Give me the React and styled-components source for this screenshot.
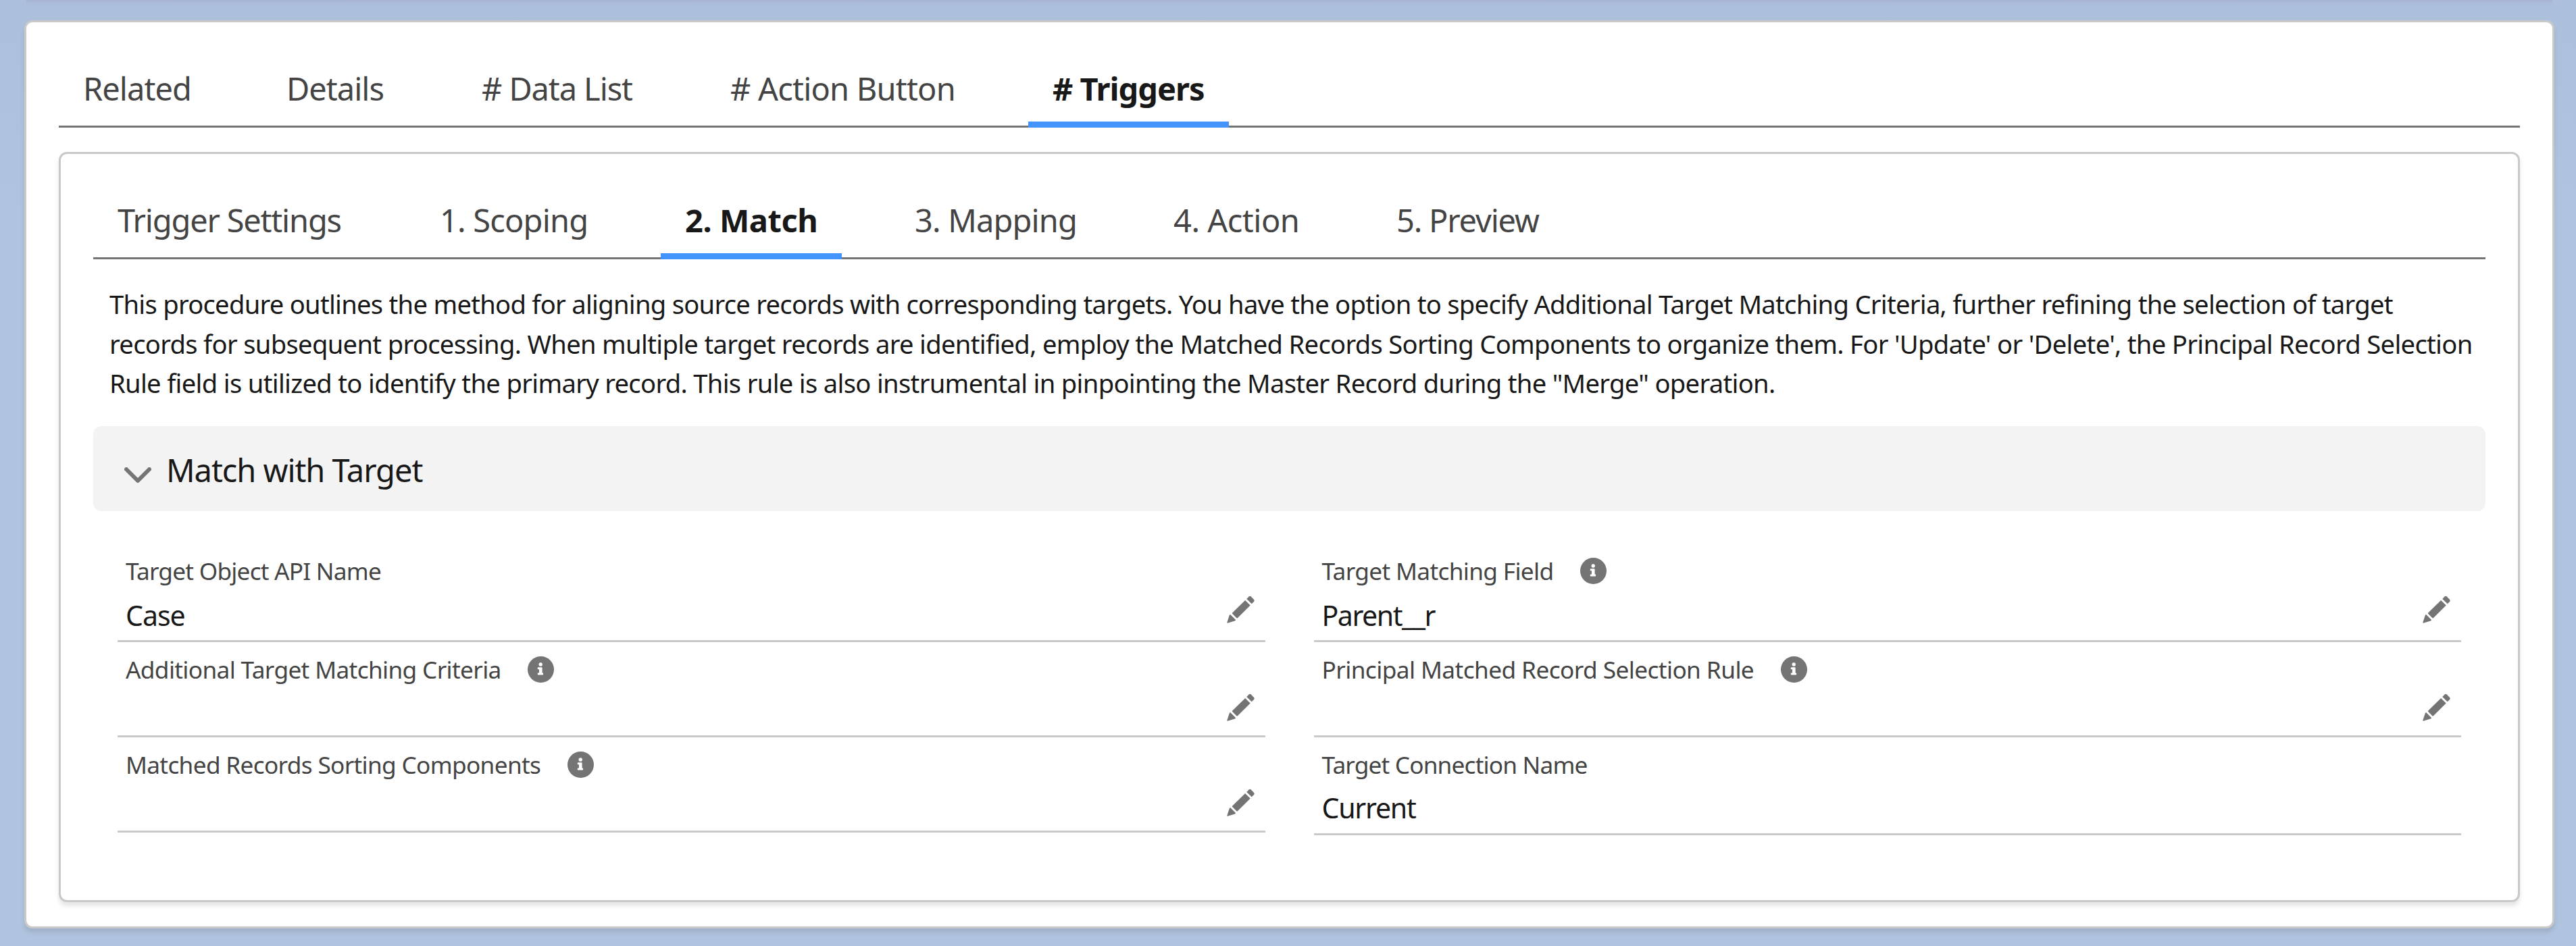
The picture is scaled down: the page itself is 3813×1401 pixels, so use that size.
import React from "react";
import styled, { createGlobalStyle } from "styled-components";

const GlobalStyle = createGlobalStyle`
  * { box-sizing: border-box; }
  body {
    margin: 0;
    background: #b0c4df;
    color: #181818;
    font-family: "Noto Sans", "Open Sans", sans-serif;
  }
`;

const Page = styled.main`
  height: 1401px;
  padding: 30px 32px 26px 36px;
  background:
    linear-gradient(#a6b3d2, #abbddb 5px, rgba(171, 190, 219, 0) 12px) 39px 0 / 3739px 12px no-repeat,
    linear-gradient(#acc0dc, #b0c4df) 0 0 / 100% 330px no-repeat,
    #b0c4df;
`;

const Card = styled.section`
  border: 3px solid #c9c9c9;
  border-radius: 12px;
  background: #fff;
  box-shadow: 0 6px 6px 0 rgba(0, 0, 0, 0.1);
  padding: ${(p) => p.$padding};
`;

const TabBar = styled.nav`
  display: flex;
  gap: 72px;
  height: 120px;
  box-shadow: inset 0 -3px 0 #747474;
`;

const Tab = styled.button`
  flex: none;
  height: 120px;
  width: ${(p) => p.$width + 72}px;
  padding: 4px 0 0 36px;
  border: 0;
  background: none;
  text-align: left;
  white-space: nowrap;
  font-family: inherit;
  font-size: 47px;
  line-height: 116px;
  letter-spacing: ${(p) => p.$tracking}px;
  font-weight: ${(p) => (p.$active ? 700 : 400)};
  color: ${(p) => (p.$active ? "#181818" : "#444")};
  box-shadow: ${(p) => (p.$active ? "inset 0 -9px 0 #4294fb" : "none")};
`;

const InnerCard = styled(Card)`
  margin-top: 36px;
`;

const Description = styled.p`
  margin: 37px 0 34.5px;
  padding-left: 24px;
  font-size: 38.2px;
  line-height: 58.5px;
`;

const Line = styled.span`
  display: block;
  white-space: nowrap;
  letter-spacing: ${(p) => p.$tracking}px;
`;

const SectionHeader = styled.header`
  display: flex;
  align-items: center;
  gap: 22px;
  height: 126px;
  padding: 3px 46px 0;
  border-radius: 12px;
  background: #f3f3f3;
`;

const SectionTitle = styled.h3`
  margin: 0;
  font-size: 47px;
  font-weight: 400;
  letter-spacing: -1.05px;
`;

const Chevron = styled.svg`
  width: 40px;
  height: 24px;
  margin-top: 17px;
`;

const Fields = styled.div`
  display: grid;
  grid-template-columns: 1fr 1fr;
  column-gap: 72px;
  align-items: start;
  padding: 47px 36px 0;
`;

const Field = styled.div`
  height: ${(p) => p.$height}px;
  padding: ${(p) => (p.$first ? 14 : 13)}px 16px 0 12px;
  border-bottom: 3px solid #c9c9c9;
`;

const Label = styled.div`
  display: flex;
  align-items: center;
  height: 54px;
  color: #444;
  font-size: 35.25px;
  white-space: nowrap;
  letter-spacing: ${(p) => p.$tracking}px;
`;

const ValueRow = styled.div`
  display: flex;
  justify-content: space-between;
  margin-top: ${(p) => (p.$first ? 8 : 6)}px;
  font-size: 41.1px;
  line-height: 63px;
  letter-spacing: ${(p) => p.$tracking}px;
`;

const InfoSvg = styled.svg`
  flex: none;
  width: 39px;
  height: 39px;
  margin-left: 39.5px;
`;

const PencilSvg = styled.svg`
  flex: none;
  width: 41px;
  height: 41px;
  margin-top: ${(p) => (p.$first ? 2 : 3)}px;
  overflow: visible;
`;

const InfoIcon = () => (
  <InfoSvg viewBox="0 0 39 39">
    <circle cx="19.5" cy="19.5" r="19.5" fill="#747474" />
    <circle cx="19.2" cy="12" r="2.7" fill="#fff" />
    <path d="M15.6 16.2h5.2q.8 0 .8.8v7.6h.7q.8 0 .8.8v1.4q0 .8-.8.8h-6.7q-.8 0-.8-.8v-1.4q0-.8.8-.8h1.4v-5.3h-1.4q-.8 0-.8-.8V17q0-.8.8-.8z" fill="#fff" />
  </InfoSvg>
);

const PencilIcon = ({ first }) => (
  <PencilSvg $first={first} viewBox="0 0 41 41" fill="#747474">
    <path d="M29.2 4.9l3.4-3.4q1.6-1.5 3.2 0l4.3 4.5q1.3 1.5 0 2.9l-3.4 3.4z" />
    <path d="M27.1 7l7.6 7.6-18.9 18.6q-.7.7-1.4 0l-6.2-6.2q-.7-.7 0-1.4z" />
    <path d="M4.3 28.4q.7-.7 1.3 0l7.2 7.3q.7.8-.2 1.3l-.9.6-9.9 3q-1.7.4-1.4-1.1l3.3-10.1z" />
  </PencilSvg>
);

const mainTabs = [
  { label: "Related", width: 157, tracking: -0.952 },
  { label: "Details", width: 145, tracking: -1.0 },
  { label: "# Data List", width: 224, tracking: -1.1 },
  { label: "# Action Button", width: 333, tracking: -0.8 },
  { label: "# Triggers", width: 225, tracking: -0.988, active: true },
];

const stepTabs = [
  { label: "Trigger Settings", width: 333, tracking: -1.2 },
  { label: "1. Scoping", width: 219, tracking: -0.82 },
  { label: "2. Match", width: 196, tracking: -0.45, active: true },
  { label: "3. Mapping", width: 239, tracking: -0.853 },
  { label: "4. Action", width: 186, tracking: -0.5 },
  { label: "5. Preview", width: 213, tracking: -1.2 },
];

const description = [
  {
    text: "This procedure outlines the method for aligning source records with corresponding targets. You have the option to specify Additional Target Matching Criteria, further refining the selection of target",
    tracking: -0.746,
  },
  {
    text: "records for subsequent processing. When multiple target records are identified, employ the Matched Records Sorting Components to organize them. For 'Update' or 'Delete', the Principal Record Selection",
    tracking: -0.7,
  },
  {
    text: 'Rule field is utilized to identify the primary record. This rule is also instrumental in pinpointing the Master Record during the "Merge" operation.',
    tracking: -0.7,
  },
];

const fields = [
  { label: "Target Object API Name", tracking: -0.795, value: "Case", valueTracking: -1.07, editable: true, first: true, height: 147 },
  { label: "Target Matching Field", tracking: -0.674, value: "Parent__r", valueTracking: -1.496, info: true, editable: true, first: true, height: 147 },
  { label: "Additional Target Matching Criteria", tracking: -0.666, info: true, editable: true, height: 141 },
  { label: "Principal Matched Record Selection Rule", tracking: -0.6, info: true, editable: true, height: 141 },
  { label: "Matched Records Sorting Components", tracking: -0.696, info: true, editable: true, height: 141 },
  { label: "Target Connection Name", tracking: -0.848, value: "Current", valueTracking: -1.26, height: 145 },
];

const Tabs = ({ items }) => (
  <TabBar>
    {items.map((t) => (
      <Tab key={t.label} $width={t.width} $tracking={t.tracking} $active={t.active}>
        {t.label}
      </Tab>
    ))}
  </TabBar>
);

export default function App() {
  return (
    <>
      <GlobalStyle />
      <Page>
        <Card $padding="36px 48px">
          <Tabs items={mainTabs} />
          <InnerCard $padding="36px 48px 96px">
            <Tabs items={stepTabs} />
            <Description>
              {description.map((l) => (
                <Line key={l.text} $tracking={l.tracking}>
                  {l.text}
                </Line>
              ))}
            </Description>
            <SectionHeader>
              <Chevron viewBox="0 0 40 24">
                <path d="M3 3l17 17L37 3" fill="none" stroke="#747474" strokeWidth="6" strokeLinecap="round" strokeLinejoin="round" />
              </Chevron>
              <SectionTitle>Match with Target</SectionTitle>
            </SectionHeader>
            <Fields>
              {fields.map((f) => (
                <Field key={f.label} $height={f.height} $first={f.first}>
                  <Label $tracking={f.tracking}>
                    {f.label}
                    {f.info && <InfoIcon />}
                  </Label>
                  <ValueRow $first={f.first} $tracking={f.valueTracking || 0}>
                    <span>{f.value}</span>
                    {f.editable && <PencilIcon first={f.first} />}
                  </ValueRow>
                </Field>
              ))}
            </Fields>
          </InnerCard>
        </Card>
      </Page>
    </>
  );
}
